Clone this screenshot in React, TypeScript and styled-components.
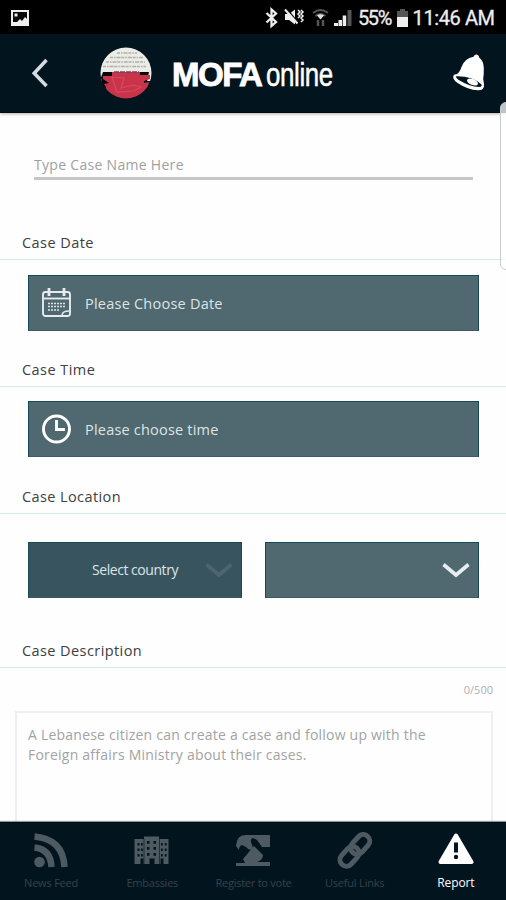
import React from "react";
import styled, { createGlobalStyle } from "styled-components";

const GlobalStyle = createGlobalStyle`
  *, *::before, *::after { box-sizing: border-box; }
  html, body { margin: 0; padding: 0; background: #fefefe; }
  body { font-family: "Open Sans", "Noto Sans", sans-serif; font-weight: 400; }
  svg { display: block; flex: none; }
`;

const Screen = styled.div`
  position: relative;
  width: 506px;
  height: 900px;
  overflow: hidden;
  display: flex;
  flex-direction: column;
  background: #fefefe;
`;

const StatusBar = styled.div`
  flex: none;
  height: 34px;
  padding: 2px 11px 0 11px;
  display: flex;
  align-items: center;
  background: #000;
  color: #eee;
  font-family: Roboto, sans-serif;
  font-size: 20px;
`;

const StatusIcons = styled.div`
  display: flex;
  align-items: center;
  margin-left: auto;
`;

const StatusText = styled.span<{ $width: number; $spacing?: number }>`
  width: ${(p) => p.$width}px;
  letter-spacing: ${(p) => p.$spacing ?? 0}px;
  white-space: nowrap;
  line-height: 24px;
  -webkit-text-stroke: 0.3px #eee;
`;

const Header = styled.header`
  flex: none;
  height: 79px;
  padding: 0 20px 0 31px;
  display: flex;
  align-items: center;
  background: #02151e;
  border-bottom: 1px solid #000a10;
  box-shadow: 0 1px 3px rgba(50, 30, 30, 0.35);
`;

const BackSlot = styled.div`
  width: 69px;
`;

const Brand = styled.h1`
  display: flex;
  margin: 3px auto 0 20px;
  color: #fff;
  font-family: "Liberation Sans", Arial, sans-serif;
  font-size: 33px;
  line-height: 40px;
  font-weight: 400;
`;

const BrandStrong = styled.span`
  width: 94px;
  font-weight: 700;
  letter-spacing: -1.5px;
  -webkit-text-stroke: 0.9px #fff;
`;

const BrandLight = styled.span`
  width: 68px;
  white-space: nowrap;
  transform: scaleX(0.785);
  transform-origin: 0 50%;
  letter-spacing: -0.5px;
  -webkit-text-stroke: 0.5px #fff;
`;

const Form = styled.main`
  flex: 1;
  min-height: 0;
  overflow: hidden;
`;

const NameField = styled.div`
  margin: 39px 33px 0 34px;
  height: 28px;
  border-bottom: 3px solid #c6c6c6;
  color: #a0a0a0;
  font-size: 14px;
  line-height: 26px;
  letter-spacing: 0.3px;
`;

const SectionTitle = styled.h2<{ $gap: number; $spacing: number }>`
  margin: ${(p) => p.$gap}px 0 0;
  padding-left: 22px;
  height: 32px;
  border-bottom: 1px solid #d5ebe7;
  color: #404040;
  font-size: 14.5px;
  line-height: 30px;
  font-weight: 400;
  letter-spacing: ${(p) => p.$spacing}px;
`;

const PickerButton = styled.div<{ $gap: number }>`
  margin: ${(p) => p.$gap}px 27px 0 28px;
  height: 56px;
  padding: 0 0 0 13px;
  display: flex;
  align-items: center;
  gap: 14px;
  background: #50686f;
  border: 1px solid #174957;
  border-bottom-color: #3e5b64;
  color: #dde4e7;
  font-size: 14.5px;
`;

const PickerLabel = styled.span<{ $spacing: number }>`
  letter-spacing: ${(p) => p.$spacing}px;
`;

const SelectRow = styled.div`
  display: grid;
  grid-template-columns: 214px 214px;
  justify-content: space-between;
  margin: 28px 27px 0 28px;
`;

const Select = styled.div<{ $active?: boolean }>`
  height: 56px;
  padding: 0 7px 1px 63px;
  display: flex;
  align-items: center;
  justify-content: space-between;
  background: ${(p) => (p.$active ? "#38545e" : "#50686f")};
  border: 1px solid #174957;
  border-bottom-color: #3e5b64;
  color: #dde4e7;
  font-size: 14px;
  letter-spacing: -0.45px;
`;

const Counter = styled.div`
  margin: 15px 13px 0 0;
  text-align: right;
  color: #b0b0b0;
  font-size: 11px;
  line-height: 14px;
`;

const Description = styled.div`
  margin: 14px 13px 0 15px;
  height: 140px;
  padding: 12px 11px;
  border: 2px solid #efefef;
  color: #a3a3a3;
  font-size: 14px;
  line-height: 20px;
  white-space: nowrap;
`;

const DescriptionLine = styled.div`
  letter-spacing: 0.22px;
`;

const TabBar = styled.nav`
  flex: none;
  height: 78px;
  display: grid;
  grid-template-columns: repeat(5, 1fr);
  background: #02151e;
  border-top: 1px solid #000a10;
  box-shadow: 0 -1px 1px rgba(0, 0, 0, 0.4);
  z-index: 1;
`;

const Tab = styled.div<{ $active?: boolean; $spacing: number }>`
  padding: 8px 0 0 1px;
  display: flex;
  flex-direction: column;
  align-items: center;
  gap: 5px;
  color: ${(p) => (p.$active ? "#fff" : "#35434b")};
  font-size: ${(p) => (p.$active ? 12 : 11)}px;
  line-height: 18px;
  letter-spacing: ${(p) => p.$spacing}px;
  white-space: nowrap;
`;

const EdgeHandle = styled.div`
  position: absolute;
  top: 102px;
  right: -8px;
  width: 14px;
  height: 168px;
  border: 1px solid #c9cccd;
  border-radius: 6px;
  background: rgba(255, 255, 255, 0.75);
  z-index: 2;
`;

const PhotoIcon = () => (
  <svg width="18" height="16" viewBox="0 0 18 16">
    <rect width="18" height="16" fill="#eee" />
    <path d="M2 2h14v7l-2-2-3 4-2-2-3 3H2z" fill="#080808" />
    <rect x="3.5" y="3.5" width="3" height="3" fill="#eee" />
  </svg>
);

const StatusGlyphs = () => (
  <svg width="93" height="22" viewBox="266 7 93 22">
    <path d="M267.500 13l9.500 9-4.500 4V9.500l4.500 4-9.500 9" fill="none" stroke="#eee" strokeWidth="2.300" />
    <path d="M286 14h4l6-4.500v15l-6-4.500h-4z" fill="#eee" />
    <path d="M287.500 8.500l11 13.500" stroke="#000" strokeWidth="1.500" />
    <path d="M286 9.500l12.500 14" stroke="#eee" strokeWidth="2" />
    <path d="M299 10l2 2-2 2 2 2-2 2M302 10l2 2-2 2 2 2-2 2 2 2-2 2" fill="none" stroke="#eee" strokeWidth="1.500" />
    <path d="M314 13q7.500-6 15 0M316.500 16q5-4 10 0" fill="none" stroke="#555" strokeWidth="1.800" />
    <path d="M318 15.500q3.500-2.500 7 0l-3.500 4z" fill="#ddd" />
    <path d="M319 20v6M324 20v6" stroke="#555" strokeWidth="2.500" />
    <path d="M335 26v-3h4v3zM339.500 26v-6h3.500v6zM343.700 26V15.500h3.500V26z" fill="#eee" />
    <path d="M348.500 26V10h4v16z" fill="#555" />
  </svg>
);

const BatteryIcon = () => (
  <svg width="11" height="18" viewBox="0 0 11 18">
    <path d="M0 2h3V0h5v2h3v7H0z" fill="#555" />
    <path d="M0 8h11v10H0z" fill="#eee" />
  </svg>
);

const BackIcon = () => (
  <svg width="18" height="32" viewBox="0 0 18 32">
    <path d="M15.500 3L3.200 16.200 15.500 29" fill="none" stroke="#d4dce2" strokeWidth="3.500" />
  </svg>
);

const Emblem = () => (
  <svg width="52" height="52" viewBox="0 0 52 52">
    <defs>
      <clipPath id="disc">
        <circle cx="26" cy="26" r="25.500" />
      </clipPath>
    </defs>
    <g clipPath="url(#disc)">
      <path d="M0 0h52v34H0z" fill="#ecece6" />
      <path d="M17 6h20M10 10.500h33M6 15h39M3 19.500h43" stroke="#aeb0ab" strokeWidth="1.500" strokeDasharray="3 1 1.500 1 4 .8" />
      <path d="M3 25h46l-2 10 5 17H0V33z" fill="#08090c" />
      <path d="M12 25h28v3l10 0v4l-6 2 0 2 5-1-3 17H3L6 40l-2-3 5-1-6-4v-3l9 0z" fill="#ca344b" />
      <path d="M12 30l12 1-3 10 12-3 8 2-7 4-17 1z" fill="none" stroke="#d64a5e" strokeWidth="1.200" />
      <path d="M14 25h25" stroke="#7b3b5c" strokeWidth="1.300" strokeDasharray="5 1" />
    </g>
  </svg>
);

const BellIcon = () => (
  <svg width="34" height="38" viewBox="0 0 34 38">
    <path d="M21.500 2.800Q23 0 25.300 .7 27 1.200 27.300 3.800 31.500 7 31.800 13.500q.2 7-.6 11.500l.8 5q.6 6.500-6 6.300-10.500-.5-20-7Q.3 25.500 1.300 22q.8-2 2.700-1.600Q7.500 19 9.500 13 12.500 4.500 21.500 2.800z" fill="#fff" />
    <path d="M4 22.300q-.3 2 4.500 4.700 9 5.500 18.500 6 3.500-.5 2.500-2.500-9-8.500-25.500-8.200z" fill="#02151e" />
    <ellipse cx="20.500" cy="28" rx="5.800" ry="3" transform="rotate(22 20.500 28)" fill="#fff" />
  </svg>
);

const CalendarIcon = () => (
  <svg width="29" height="30" viewBox="0 0 29 30" fill="none">
    <rect x="1" y="4" width="27" height="24" rx="2.500" stroke="#e5ebef" strokeWidth="1.900" />
    <path d="M1 10.500h27" stroke="#e5ebef" strokeWidth="1.900" />
    <path d="M7 0v8M22 0v8" stroke="#e5ebef" strokeWidth="2.800" />
    <path d="M6 15.500h18M6 18.500h18M6 22h12" stroke="#dbe3e7" strokeWidth="1.600" strokeDasharray="2 1" />
    <path d="M20 27q.5-4 7-4" stroke="#e5ebef" strokeWidth="1.500" />
  </svg>
);

const ClockIcon = () => (
  <svg width="29" height="30" viewBox="0 0 29 30" fill="none" stroke="#fff">
    <circle cx="14.500" cy="15" r="13" strokeWidth="2.900" />
    <path d="M14.500 6v9.500H23" strokeWidth="2.900" />
  </svg>
);

const ChevronIcon = ({ color }: { color: string }) => (
  <svg width="30" height="18" viewBox="0 0 30 18">
    <path d="M2.500 3.500L15 14 27.500 3.500" fill="none" stroke={color} strokeWidth="3.700" />
  </svg>
);

const FeedIcon = () => (
  <svg width="36" height="38" viewBox="0 0 36 38" fill="none">
    <circle cx="6.500" cy="31" r="5.300" fill="#4e5a61" />
    <path d="M1.500 16.500Q17.500 18 18.500 36M1.500 5.500Q30 8 31.500 36" stroke="#4e5a61" strokeWidth="6.500" />
  </svg>
);

const EmbassyIcon = () => (
  <svg width="36" height="38" viewBox="0 0 36 38">
    <path d="M.5 8H10V5.500h15V8h9.500v25h-5v-5.500h-3V33h-6v-5.500h-5V33h-6v-5.500h-3V33h-6z" fill="#4e5a61" />
    <path d="M10 8v25M25.500 8v25" stroke="#02151e" strokeWidth=".6" />
    <g fill="#02151e">
      <path d="M3.500 12h2v2.500h-2zM7 12h1.800v2.500H7zM3.500 17.500h2V20h-2zM7 17.500h1.800V20H7zM3.500 23h2v2.500h-2zM7 23h1.800v2.500H7z" />
      <path d="M13 10h2.500v2.800H13zM19.500 10H22v2.800h-2.500zM13 16h2.500v2.800H13zM19.500 16H22v2.800h-2.500zM13 22h2.500v2.800H13zM19.500 22H22v2.800h-2.500z" />
      <path d="M27 12h1.800v2.500H27zM30.800 12h1.800v2.500h-1.800zM27 17.500h1.800V20H27zM30.800 17.500h1.800V20h-1.800zM27 23h1.800v2.500H27zM30.800 23h1.800v2.500h-1.800z" />
    </g>
  </svg>
);

const VoteIcon = () => (
  <svg width="36" height="38" viewBox="0 0 36 38">
    <path d="M1 15Q2 4 10 4h25v12h-8l-5-7q-7-4-6 2l2 6q-3 4-7-1l-4-2q-3 1-3 5z" fill="#4e5a61" />
    <path d="M8 28l11-13 9 9q0 5-6 7H35v4H1v-3h9z" fill="#4e5a61" />
    <path d="M17 8q7 2 6 8" fill="none" stroke="#02151e" strokeWidth="2" />
  </svg>
);

const LinkIcon = () => (
  <svg width="36" height="38" viewBox="0 0 36 38">
    <g transform="rotate(-48 18 19.500)" fill="none" stroke="#4e5a61" strokeWidth="5">
      <rect x="-1" y="12.800" width="22" height="13" rx="6.500" />
      <rect x="15" y="12.800" width="22" height="13" rx="6.500" />
    </g>
  </svg>
);

const ReportIcon = () => (
  <svg width="36" height="38" viewBox="0 0 36 38">
    <path d="M18 4.500L33.500 31H2.500z" fill="#fff" stroke="#fff" strokeWidth="4" strokeLinejoin="round" />
    <path d="M18 11.500v10" stroke="#02151e" strokeWidth="4" />
    <circle cx="18" cy="26" r="2.200" fill="#02151e" />
  </svg>
);

const tabs = [
  { label: "News Feed", Icon: FeedIcon, spacing: -0.2 },
  { label: "Embassies", Icon: EmbassyIcon, spacing: -0.25 },
  { label: "Register to vote", Icon: VoteIcon, spacing: -0.25 },
  { label: "Useful Links", Icon: LinkIcon, spacing: -0.2 },
  { label: "Report", Icon: ReportIcon, spacing: -0.1, active: true },
];

export default function App() {
  return (
    <>
      <GlobalStyle />
      <Screen>
        <StatusBar>
          <PhotoIcon />
          <StatusIcons>
            <StatusGlyphs />
            <StatusText $width={39} $spacing={-1.4}>55%</StatusText>
            <BatteryIcon />
            <StatusText $width={87} $spacing={-0.4}>&nbsp;11:46 AM</StatusText>
          </StatusIcons>
        </StatusBar>
        <Header>
          <BackSlot>
            <BackIcon />
          </BackSlot>
          <Emblem />
          <Brand>
            <BrandStrong>MOFA</BrandStrong>
            <BrandLight>online</BrandLight>
          </Brand>
          <BellIcon />
        </Header>
        <Form>
          <NameField>Type Case Name Here</NameField>
          <SectionTitle $gap={48} $spacing={0.45}>Case Date</SectionTitle>
          <PickerButton $gap={15}>
            <CalendarIcon />
            <PickerLabel $spacing={0.23}>Please Choose Date</PickerLabel>
          </PickerButton>
          <SectionTitle $gap={24} $spacing={0.45}>Case Time</SectionTitle>
          <PickerButton $gap={14}>
            <ClockIcon />
            <PickerLabel $spacing={0.2}>Please choose time</PickerLabel>
          </PickerButton>
          <SectionTitle $gap={25} $spacing={0.4}>Case Location</SectionTitle>
          <SelectRow>
            <Select $active>
              <span>Select country</span>
              <ChevronIcon color="#4c656e" />
            </Select>
            <Select>
              <span />
              <ChevronIcon color="#e5edf0" />
            </Select>
          </SelectRow>
          <SectionTitle $gap={38} $spacing={0.42}>Case Description</SectionTitle>
          <Counter>0/500</Counter>
          <Description>
            <DescriptionLine>A Lebanese citizen can create a case and follow up with the</DescriptionLine>
            <DescriptionLine>Foreign affairs Ministry about their cases.</DescriptionLine>
          </Description>
        </Form>
        <TabBar>
          {tabs.map(({ label, Icon, spacing, active }) => (
            <Tab key={label} $active={active} $spacing={spacing}>
              <Icon />
              <span>{label}</span>
            </Tab>
          ))}
        </TabBar>
        <EdgeHandle />
      </Screen>
    </>
  );
}
